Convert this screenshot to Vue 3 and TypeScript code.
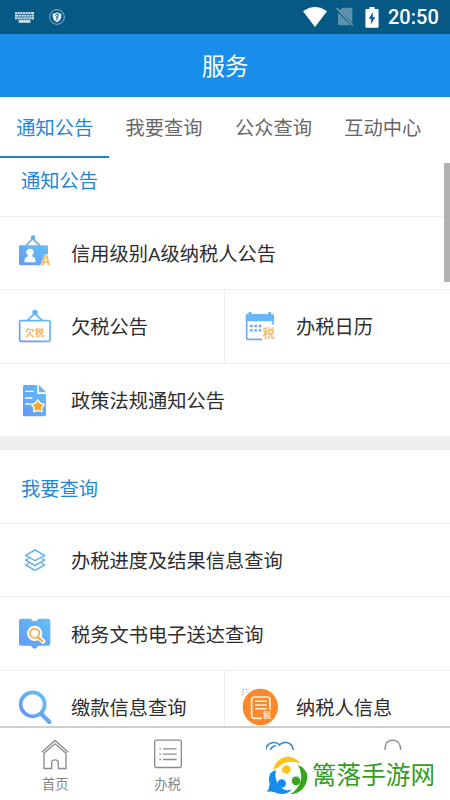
<script setup lang="ts">
import { ref } from 'vue'

interface Entry { label: string; icon: string }
interface Section { title: string; rows: Entry[][] }

const tabs: string[] = ['通知公告', '我要查询', '公众查询', '互动中心']
const active = ref(0)

const sections: Section[] = [
  {
    title: '通知公告',
    rows: [
      [{ label: '信用级别A级纳税人公告', icon: 'credit' }],
      [{ label: '欠税公告', icon: 'arrears' }, { label: '办税日历', icon: 'calendar' }],
      [{ label: '政策法规通知公告', icon: 'policy' }],
    ],
  },
  {
    title: '我要查询',
    rows: [
      [{ label: '办税进度及结果信息查询', icon: 'layers' }],
      [{ label: '税务文书电子送达查询', icon: 'book' }],
      [{ label: '缴款信息查询', icon: 'search' }, { label: '纳税人信息', icon: 'payer' }],
    ],
  },
]

const viewBoxes: Record<string, string> = {
  credit: '45 40 120 120',
  arrears: '45 18 120 120',
  calendar: '60 48 120 120',
  policy: '45 238 120 120',
  layers: '45 331 120 120',
  book: '45 40 120 120',
  search: '45 261 120 120',
  payer: '60 81 120 120',
}
</script>

<template>
  <div class="screen">
    <svg class="defs" width="0" height="0">
      <defs>
        <linearGradient id="sky" x1="1" y1="0" x2="0" y2="1">
          <stop offset="0" stop-color="#62c1f8" />
          <stop offset="1" stop-color="#6797f4" />
        </linearGradient>
      </defs>
    </svg>

    <div class="status">
      <svg class="keyboard" viewBox="0 0 57 33">
        <path d="M0 0H57V23H46V32H11V23H0Z" fill="#d3e7ee" />
        <path d="M0 7.5H57M0 15H57M0 23H57M7 0V7M15 0V7M23 0V7M31 0V7M39 0V7M47 0V7M11 8V15M19 8V15M27 8V15M35 8V15M43 8V15M50 8V15M8 16V23M16 16V23M24 16V23M32 16V23M40 16V23M48 16V23" stroke="#065985" stroke-width="2" />
      </svg>
      <svg class="shield" viewBox="0 0 48 48">
        <circle cx="24" cy="24" r="22" fill="none" stroke="#a5c6d6" stroke-width="2.5" />
        <path d="M24 10Q30 14 37 14V23Q36 34 24 40Q12 34 11 23V14Q18 14 24 10Z" fill="#e5f3f7" />
        <path d="M24 34V22M20 20Q20 15 24 15Q29 15 28 20Q27 24 22 25" fill="none" stroke="#065985" stroke-width="3" />
      </svg>
      <div class="spacer"></div>
      <svg class="wifi" viewBox="0 0 72 60"><path d="M0 13Q36 -13 72 13L36 60Z" fill="#fff" /></svg>
      <svg class="sim" viewBox="0 0 54 60">
        <path d="M18 2H45Q49 2 49 6V48L11 10ZM8 18L44 55H10Q6 55 6 51V20Z" fill="#5c91ad" />
        <path d="M2 3L50 55" stroke="#7ba4b9" stroke-width="4" />
      </svg>
      <svg class="battery" viewBox="0 0 40 64">
        <path d="M12 0H28V6H37Q40 6 40 9V60Q40 63 37 63H3Q0 63 0 60V9Q0 6 3 6H12Z" fill="#fff" />
        <path d="M23 15L10 36H18L16 53L30 31H22Z" fill="#065985" />
      </svg>
      <span class="clock">20:50</span>
    </div>

    <header class="header">服务</header>

    <nav class="tabs">
      <button v-for="(tab, i) in tabs" :key="tab" class="tab" :class="{ active: i === active }" @click="active = i">{{ tab }}</button>
    </nav>

    <main class="content">
      <section v-for="section in sections" :key="section.title" class="section">
        <h2 class="title">{{ section.title }}</h2>
        <div v-for="(row, r) in section.rows" :key="r" class="row">
          <div v-for="item in row" :key="item.label" class="entry">
            <svg class="icon" :viewBox="viewBoxes[item.icon]">
              <g v-if="item.icon === 'credit'">
                <path d="M78 78L98 57L120 78" fill="none" stroke="#7ab7ef" stroke-width="6" />
                <circle cx="99" cy="54" r="7" fill="#65aef1" />
                <path d="M61 77H140Q144 77 144 81V104H134L121 137H61Q57 137 57 133V81Q57 77 61 77Z" fill="url(#sky)" />
                <circle cx="90" cy="98" r="11" fill="#fff" />
                <path d="M85 103H95V110Q107 112 107 128H73Q73 112 85 110Z" fill="#fff" />
                <path d="M126 137L135 109H140L147 137M130 128H145" fill="none" stroke="#f5bd61" stroke-width="6" />
              </g>
              <g v-else-if="item.icon === 'arrears'">
                <path d="M82 62L104 40L127 62" fill="none" stroke="#78b5ee" stroke-width="6" />
                <circle cx="105" cy="37" r="8" fill="#65b0ef" />
                <rect x="59" y="62" width="91" height="62" rx="3" fill="#fff" stroke="url(#sky)" stroke-width="5" />
                <text x="104" y="107" text-anchor="middle" class="glyph arrears">欠税</text>
              </g>
              <g v-else-if="item.icon === 'calendar'">
                <path d="M80 94V143Q80 148 85 148H126M159 94V104" fill="none" stroke="#70aaf3" stroke-width="5" />
                <path d="M77 94V77Q77 72 82 72H85V69Q85 66 90 66Q95 66 95 69V72H144V69Q144 66 149 66Q154 66 154 69V72H157Q162 72 162 77V94Z" fill="#65b7f5" />
                <path d="M90 108H126M90 121H126" stroke="#70a7f1" stroke-width="7" stroke-dasharray="8 5" />
                <text x="146" y="145" text-anchor="middle" class="glyph calendar">税</text>
              </g>
              <g v-else-if="item.icon === 'policy'">
                <path d="M74 253H112V280H138V342Q138 347 133 347H74Q69 347 69 342V258Q69 253 74 253Z" fill="url(#sky)" />
                <path d="M117 253L138 275H117Z" fill="#6cacf0" />
                <path d="M75 272H101M75 292H97M75 310H92" stroke="#fff" stroke-width="4" />
                <path d="M113 300L119 309L130 312L123 320L124 331L113 327L103 331L104 320L97 312L108 309Z" fill="#f5a927" stroke="#fff" stroke-width="8" stroke-linejoin="round" paint-order="stroke" />
              </g>
              <g v-else-if="item.icon === 'layers'" fill="none" stroke="#62b3e4" stroke-width="4.5" stroke-linejoin="round">
                <path d="M105 361L134 377L105 393L77 377Z" />
                <path d="M86 385L77 391L105 408L134 391L125 385" />
                <path d="M86 400L77 406L105 422L134 406L125 400" />
              </g>
              <g v-else-if="item.icon === 'book'">
                <path d="M64 54H92L99 61H109L116 54H144Q151 54 151 61V129Q151 135 145 135H119Q113 135 110 141Q104 147 98 141Q95 135 89 135H64Q57 135 57 129V61Q57 54 64 54Z" fill="url(#sky)" />
                <circle cx="104" cy="98" r="18" fill="#fff" stroke="#fff" stroke-width="10" />
                <path d="M117 111L129 122" stroke="#fff" stroke-width="14" stroke-linecap="round" />
                <circle cx="104" cy="98" r="14" fill="#fff" stroke="#f3b65c" stroke-width="6" />
                <path d="M114 110L127 121" stroke="#f3a53c" stroke-width="6" stroke-linecap="round" />
              </g>
              <g v-else-if="item.icon === 'search'">
                <circle cx="98" cy="313" r="36" fill="#fff" stroke="url(#sky)" stroke-width="11" />
                <path d="M124 342L148 366" stroke="#67a7f6" stroke-width="13" stroke-linecap="round" />
              </g>
              <g v-else>
                <path d="M68 106V88H88" fill="none" stroke="#9c9ba2" stroke-width="3" stroke-dasharray="4 5" />
                <path d="M76 100L86 93" stroke="#d4a2c2" stroke-width="3" stroke-dasharray="3 4" />
                <ellipse cx="121" cy="141" rx="53" ry="55" fill="#f9892a" />
                <path d="M126 175H103Q95 175 95 167V119Q95 111 103 111H142Q150 111 150 119V149" fill="none" stroke="#fff1dd" stroke-width="5" />
                <path d="M105 124H140M105 135H140M105 146H140" stroke="#fff1dd" stroke-width="4.5" />
                <text x="141" y="173" text-anchor="middle" class="glyph payer">税</text>
              </g>
            </svg>
            <span>{{ item.label }}</span>
          </div>
        </div>
      </section>
      <div class="scrollbar"></div>
    </main>

    <footer class="bottom">
      <div class="nav-item">
        <svg class="nav-icon" viewBox="0 0 84 92" fill="none" stroke="#8b8b8b" stroke-width="4">
          <path d="M2 39L42 4L82 39" />
          <path d="M9 42V88H32V71Q32 62 42 62Q52 62 52 71V88H75V42L42 14Z" />
        </svg>
        <span>首页</span>
      </div>
      <div class="nav-item">
        <svg class="nav-icon" viewBox="0 0 84 92" fill="none" stroke="#8b8b8b" stroke-width="4">
          <rect x="2" y="3" width="80" height="82" rx="5" />
          <path d="M27 29H68M27 45H68M27 61H68" stroke-width="4" />
          <path d="M16 29H21M16 45H21M16 61H21" stroke-width="4" />
        </svg>
        <span>办税</span>
      </div>
      <div class="nav-item">
        <svg class="nav-icon" viewBox="0 0 84 92" fill="none" stroke="#3f8ac5" stroke-width="5">
          <path d="M-1 34Q2 12 22 10Q33 9 40 17Q50 8 63 10Q80 14 82 34M13 34Q16 21 29 20" />
        </svg>
      </div>
      <div class="nav-item">
        <svg class="nav-icon" viewBox="0 0 84 92" fill="none" stroke="#8b8b8b" stroke-width="4">
          <path d="M21 34Q19 4 44 3Q69 4 68 34" />
        </svg>
      </div>
      <div class="brand">
        <svg class="brand-logo" viewBox="78 100 126 122">
          <path d="M99 146C104 119 125 105 145 105Q168 106 182 126C160 114 129 119 114 138Q106 138 99 146Z" fill="#fbc51c" />
          <path d="M174 130Q190 133 201 155C207 185 185 218 151 217C171 205 187 181 183 158Q182 141 174 130Z" fill="#36a51b" />
          <path d="M91 154Q99 147 108 145C101 171 115 199 139 205Q147 206 155 203Q140 222 111 214Q100 207 80 210Q88 201 89 187Q84 169 91 154Z" fill="#168bee" />
          <circle cx="139" cy="143" r="13" fill="#fbc51c" />
          <circle cx="125" cy="185" r="13" fill="#168bee" />
          <circle cx="168" cy="177" r="13" fill="#36a51b" />
        </svg>
        <span class="brand-name">篱落手游网</span>
      </div>
    </footer>
  </div>
</template>

<style>
body { margin: 0; overflow: hidden; }
</style>

<style scoped>
.screen { width: 450px; height: 800px; display: flex; flex-direction: column; overflow: hidden; background: #fff; color: #2d2d2d; font-family: Roboto, "Noto Sans CJK SC", sans-serif; font-size: 19.25px; }
.defs { position: absolute; }
.status { flex: none; box-sizing: border-box; height: 34px; background: #065985; display: flex; align-items: center; padding: 0 12px 0 15px; color: #fff; }
.keyboard { width: 19px; height: 11px; }
.shield { width: 16px; height: 16px; margin-left: 15px; }
.spacer { flex: 1; }
.wifi { width: 24px; height: 20px; margin-right: 9px; }
.sim { width: 18px; height: 20px; margin-right: 11px; }
.battery { width: 14px; height: 21px; margin-right: 9px; }
.clock { font: 500 20px/36px Roboto, sans-serif; width: 50px; white-space: nowrap; }
.header { flex: none; height: 63px; background: #188dea; color: #fff; font-size: 23.3px; line-height: 66px; text-align: center; }
.tabs { flex: none; height: 61px; display: grid; grid-template-columns: repeat(4, 109.4px); }
.tab { box-sizing: border-box; border: 0; border-bottom: 2.5px solid transparent; margin: 0; padding: 5px 0 0; background: none; font: inherit; line-height: 54px; color: #666; }
.tab.active { color: #2387d9; border-bottom-color: #2382cb; }
.content { position: relative; flex: 1; min-height: 0; overflow: hidden; }
.section + .section { border-top: 14px solid #eee; }
.title { margin: 0; padding-left: 21px; height: 73.2px; line-height: 79px; font-size: 19.25px; font-weight: 400; color: #2387d9; }
.section:first-child .title { height: 58px; line-height: 48px; }
.row { box-sizing: border-box; height: 73.3px; display: flex; border-top: 1px solid #eee; }
.entry { flex: 1; display: flex; align-items: center; gap: 16px; padding-left: 15px; white-space: nowrap; }
.entry:first-child:not(:last-child) { box-sizing: border-box; flex: 0 0 224px; }
.entry + .entry { border-left: 1px solid #eee; }
.icon { flex: none; width: 40px; height: 40px; }
.glyph { font-family: "Noto Sans CJK SC", sans-serif; font-weight: 700; }
.arrears { font-size: 28px; fill: #f2b45f; }
.calendar { font-size: 36px; fill: #f5be6b; }
.payer { font-size: 24px; fill: #fff1dd; }
.scrollbar { position: absolute; right: 0; top: 5px; width: 6px; height: 119px; background: #b1b1b1; }
.bottom { position: relative; flex: none; box-sizing: border-box; height: 74px; border-top: 2px solid #cfcfcf; background: #fff; display: grid; grid-template-columns: repeat(4, 112.4px); }
.nav-item { display: flex; flex-direction: column; align-items: center; padding: 11px 2px 0 0; font-size: 13.3px; line-height: 20px; color: #858585; }
.nav-icon { width: 28px; height: 31px; margin-bottom: 5px; }
.brand { position: absolute; right: 0; bottom: 0; box-sizing: border-box; width: 187px; height: 50px; padding-left: 3px; background: #fff; display: flex; align-items: center; gap: 4px; color: #329d1f; font-size: 24.6px; white-space: nowrap; }
.brand-logo { flex: none; width: 42px; height: 41px; }
.brand-name { padding-bottom: 5px; }
</style>
